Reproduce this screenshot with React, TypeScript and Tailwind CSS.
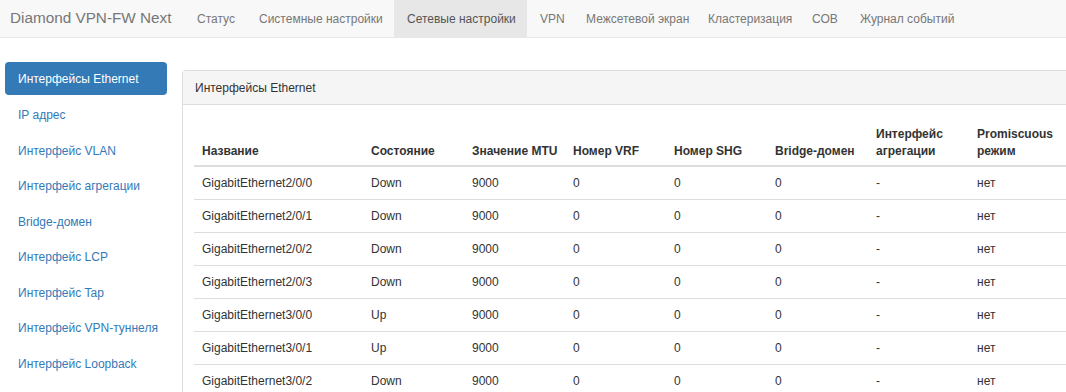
import React from 'react';

const navItems = [
  { label: 'Статус', w: 'w-[62px]' },
  { label: 'Системные настройки', w: 'w-[148px]' },
  { label: 'Сетевые настройки', w: 'w-[133px]', active: true },
  { label: 'VPN', w: 'w-[46px]' },
  { label: 'Межсетевой экран', w: 'w-[122px]' },
  { label: 'Кластеризация', w: 'w-[104px]' },
  { label: 'СОВ', w: 'w-[48px]' },
  { label: 'Журнал событий', w: 'w-[115px]' },
];

const sideItems = [
  'Интерфейсы Ethernet',
  'IP адрес',
  'Интерфейс VLAN',
  'Интерфейс агрегации',
  'Bridge-домен',
  'Интерфейс LCP',
  'Интерфейс Tap',
  'Интерфейс VPN-туннеля',
  'Интерфейс Loopback',
];

const rows = [
  ['GigabitEthernet2/0/0', 'Down'],
  ['GigabitEthernet2/0/1', 'Down'],
  ['GigabitEthernet2/0/2', 'Down'],
  ['GigabitEthernet2/0/3', 'Down'],
  ['GigabitEthernet3/0/0', 'Up'],
  ['GigabitEthernet3/0/1', 'Up'],
  ['GigabitEthernet3/0/2', 'Down'],
];

const headers: React.ReactNode[] = [
  'Название',
  'Состояние',
  'Значение MTU',
  'Номер VRF',
  'Номер SHG',
  'Bridge-домен',
  <>Интерфейс<br />агрегации</>,
  <>Promiscuous<br />режим</>,
];

export default function App() {
  return (
    <div className="w-[1066px] h-[392px] overflow-hidden bg-white text-[12px] text-[#333] font-['Liberation_Sans',Arial,sans-serif]">
      <nav className="flex h-[38px] bg-[#f8f8f8] border-b border-[#e7e7e7] whitespace-nowrap">
        <div className="w-[184px] pl-[10px] flex items-center text-[15.3px] text-[#777]">Diamond VPN-FW Next</div>
        {navItems.map((item) => (
          <div
            key={item.label}
            className={
              item.active
                ? `${item.w} pl-[13px] flex items-center text-[#555] bg-[#e7e7e7]`
                : `${item.w} pl-[13px] flex items-center text-[#777]`
            }
          >
            {item.label}
          </div>
        ))}
      </nav>

      <div className="flex pt-[24px]">
        <ul className="w-[162px] ml-[5px] shrink-0 whitespace-nowrap">
          {sideItems.map((item, i) => (
            <li
              key={item}
              className={
                i === 0
                  ? 'h-[33px] mb-[3.5px] px-[13px] flex items-center rounded-[4px] bg-[#337ab7] text-white'
                  : 'h-[33px] mb-[2.5px] px-[13px] flex items-center text-[#337ab7]'
              }
            >
              {item}
            </li>
          ))}
        </ul>

        <div className="ml-[15px] mt-[8px] flex-1 border border-[#ddd] border-r-0 rounded-tl-[4px] min-w-0">
          <div className="h-[34px] px-[12px] flex items-center bg-[#f5f5f5] border-b border-[#ddd]">Интерфейсы Ethernet</div>
          <div className="pt-[10px] pl-[11px]">
            <table className="w-[876px] table-fixed border-collapse text-left whitespace-nowrap">
              <colgroup>
                <col className="w-[169px]" />
                <col className="w-[101px]" />
                <col className="w-[101px]" />
                <col className="w-[101px]" />
                <col className="w-[101px]" />
                <col className="w-[101px]" />
                <col className="w-[101px]" />
                <col className="w-[101px]" />
              </colgroup>
              <thead>
                <tr>
                  {headers.map((h, i) => (
                    <th key={i} className="px-[8px] pt-[11px] pb-[5px] leading-[17px] align-bottom font-bold border-b-2 border-[#ddd]">
                      {h}
                    </th>
                  ))}
                </tr>
              </thead>
              <tbody>
                {rows.map(([name, state]) => (
                  <tr key={name}>
                    {[name, state, '9000', '0', '0', '0', '-', 'нет'].map((c, i) => (
                      <td key={i} className="px-[8px] py-[8px] leading-[16px] border-t border-[#ddd]">
                        {c}
                      </td>
                    ))}
                  </tr>
                ))}
              </tbody>
            </table>
          </div>
        </div>
      </div>
    </div>
  );
}
